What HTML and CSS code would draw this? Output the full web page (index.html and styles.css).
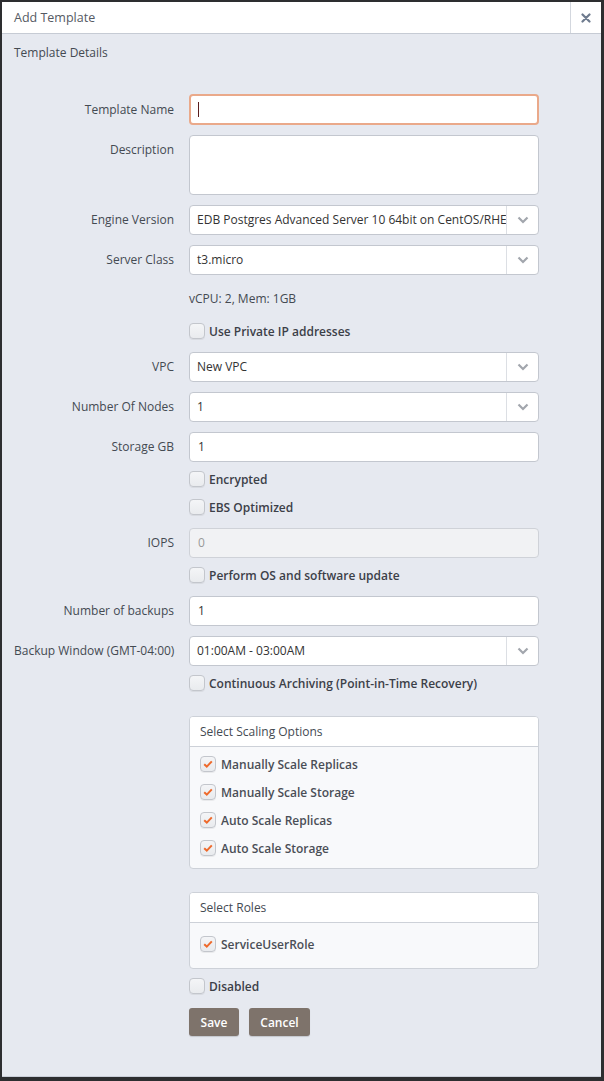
FILE: index.html
```html
<!DOCTYPE html>
<html>
<head>
<meta charset="utf-8">
<link rel="stylesheet" href="styles.css">
</head>
<body>
<div class="modal">
  <div class="modal-header">
    <div class="modal-title">Add Template</div>
    <div class="modal-close">
      <svg width="10" height="10" viewBox="0 0 10 10"><path d="M1.5 1.5 L8.5 8.5 M8.5 1.5 L1.5 8.5" stroke="#6e7b8e" stroke-width="2.2" stroke-linecap="round"/></svg>
    </div>
  </div>
  <div class="modal-body">
    <div class="section-title">Template Details</div>
    <div class="form">
      <div class="row">
        <label class="lbl lbl-focus">Template Name</label>
        <div class="input focus"><span class="caret"></span></div>
      </div>
      <div class="row">
        <label class="lbl">Description</label>
        <div class="input textarea"></div>
      </div>
      <div class="row">
        <label class="lbl">Engine Version</label>
        <div class="select"><div class="select-val">EDB Postgres Advanced Server 10 64bit on CentOS/RHEL 7</div><div class="select-btn"><svg width="12" height="8" viewBox="0 0 12 8"><path d="M1.5 1.5 L6 6 L10.5 1.5" fill="none" stroke="#a2a6ad" stroke-width="2.2"/></svg></div></div>
      </div>
      <div class="row">
        <label class="lbl">Server Class</label>
        <div class="select"><div class="select-val">t3.micro</div><div class="select-btn"><svg width="12" height="8" viewBox="0 0 12 8"><path d="M1.5 1.5 L6 6 L10.5 1.5" fill="none" stroke="#a2a6ad" stroke-width="2.2"/></svg></div></div>
      </div>
      <div class="row info-row">
        <span class="lbl"></span>
        <span class="info">vCPU: 2, Mem: 1GB</span>
      </div>
      <div class="row check-row">
        <span class="lbl"></span>
        <span class="cb"></span><span class="cb-text">Use Private IP addresses</span>
      </div>
      <div class="row">
        <label class="lbl">VPC</label>
        <div class="select"><div class="select-val">New VPC</div><div class="select-btn"><svg width="12" height="8" viewBox="0 0 12 8"><path d="M1.5 1.5 L6 6 L10.5 1.5" fill="none" stroke="#a2a6ad" stroke-width="2.2"/></svg></div></div>
      </div>
      <div class="row">
        <label class="lbl">Number Of Nodes</label>
        <div class="select"><div class="select-val">1</div><div class="select-btn"><svg width="12" height="8" viewBox="0 0 12 8"><path d="M1.5 1.5 L6 6 L10.5 1.5" fill="none" stroke="#a2a6ad" stroke-width="2.2"/></svg></div></div>
      </div>
      <div class="row">
        <label class="lbl">Storage GB</label>
        <div class="input">1</div>
      </div>
      <div class="row check-row">
        <span class="lbl"></span>
        <span class="cb"></span><span class="cb-text">Encrypted</span>
      </div>
      <div class="row check-row">
        <span class="lbl"></span>
        <span class="cb"></span><span class="cb-text">EBS Optimized</span>
      </div>
      <div class="row">
        <label class="lbl">IOPS</label>
        <div class="input disabled">0</div>
      </div>
      <div class="row check-row">
        <span class="lbl"></span>
        <span class="cb"></span><span class="cb-text">Perform OS and software update</span>
      </div>
      <div class="row">
        <label class="lbl">Number of backups</label>
        <div class="input">1</div>
      </div>
      <div class="row">
        <label class="lbl">Backup Window (GMT-04:00)</label>
        <div class="select"><div class="select-val">01:00AM - 03:00AM</div><div class="select-btn"><svg width="12" height="8" viewBox="0 0 12 8"><path d="M1.5 1.5 L6 6 L10.5 1.5" fill="none" stroke="#a2a6ad" stroke-width="2.2"/></svg></div></div>
      </div>
      <div class="row check-row">
        <span class="lbl"></span>
        <span class="cb"></span><span class="cb-text">Continuous Archiving (Point-in-Time Recovery)</span>
      </div>
      <div class="row panel-row scaling">
        <span class="lbl"></span>
        <div class="panel">
          <div class="panel-head">Select Scaling Options</div>
          <div class="panel-body">
            <div class="p-item"><span class="cb checked"><svg width="10" height="8" viewBox="0 0 10 8"><path d="M1.2 4.2 L3.8 6.6 L8.8 1.4" fill="none" stroke="#ee6a2c" stroke-width="2"/></svg></span><span class="cb-text">Manually Scale Replicas</span></div>
            <div class="p-item"><span class="cb checked"><svg width="10" height="8" viewBox="0 0 10 8"><path d="M1.2 4.2 L3.8 6.6 L8.8 1.4" fill="none" stroke="#ee6a2c" stroke-width="2"/></svg></span><span class="cb-text">Manually Scale Storage</span></div>
            <div class="p-item"><span class="cb checked"><svg width="10" height="8" viewBox="0 0 10 8"><path d="M1.2 4.2 L3.8 6.6 L8.8 1.4" fill="none" stroke="#ee6a2c" stroke-width="2"/></svg></span><span class="cb-text">Auto Scale Replicas</span></div>
            <div class="p-item"><span class="cb checked"><svg width="10" height="8" viewBox="0 0 10 8"><path d="M1.2 4.2 L3.8 6.6 L8.8 1.4" fill="none" stroke="#ee6a2c" stroke-width="2"/></svg></span><span class="cb-text">Auto Scale Storage</span></div>
          </div>
        </div>
      </div>
      <div class="row panel-row roles">
        <span class="lbl"></span>
        <div class="panel">
          <div class="panel-head">Select Roles</div>
          <div class="panel-body">
            <div class="p-item"><span class="cb checked"><svg width="10" height="8" viewBox="0 0 10 8"><path d="M1.2 4.2 L3.8 6.6 L8.8 1.4" fill="none" stroke="#ee6a2c" stroke-width="2"/></svg></span><span class="cb-text">ServiceUserRole</span></div>
          </div>
        </div>
      </div>
      <div class="row check-row disabled-row">
        <span class="lbl"></span>
        <span class="cb"></span><span class="cb-text">Disabled</span>
      </div>
      <div class="row btn-row">
        <span class="lbl"></span>
        <button class="btn btn-save">Save</button>
        <button class="btn btn-cancel">Cancel</button>
      </div>
    </div>
  </div>
</div>
</body>
</html>
```

FILE: styles.css
```css
html, body {
  margin: 0;
  padding: 0;
}
body {
  background: #2d2e30;
  font-family: "Open Sans", "Noto Sans", sans-serif;
  font-size: 12px;
  color: #444a52;
  width: 604px;
  height: 1081px;
  overflow: hidden;
}
.modal {
  margin: 2px 3px 0 2px;
  height: 1075px;
  background: #e6e9f0;
  display: flex;
  flex-direction: column;
  border-bottom: 1px solid #c9ced8;
  box-sizing: border-box;
}
.modal-header {
  height: 31px;
  background: #ffffff;
  border-bottom: 1px solid #c6cbd4;
  display: flex;
  align-items: stretch;
  flex: none;
}
.modal-title {
  flex: 1;
  display: flex;
  align-items: center;
  padding-left: 12px;
  font-size: 12.5px;
  color: #555a63;
}
.modal-close {
  width: 30px;
  border-left: 1px solid #d3d7de;
  display: flex;
  align-items: center;
  justify-content: center;
}
.modal-body {
  padding: 10px 0 0 12px;
}
.section-title {
  height: 18px;
  line-height: 18px;
  color: #444a52;
}
.form {
  padding-top: 32px;
  width: 525px;
}
.row {
  display: flex;
  align-items: flex-start;
  margin-bottom: 10px;
}
.lbl {
  width: 160px;
  flex: none;
  text-align: right;
  box-sizing: border-box;
  line-height: 30px;
  color: #444a52;
  white-space: nowrap;
  margin-right: 15px;
}
.lbl-focus {
  line-height: 31px;
}
.input {
  width: 350px;
  height: 30px;
  box-sizing: border-box;
  border: 1px solid #c3c7cf;
  border-radius: 4px;
  background: #fff;
  padding-left: 8px;
  line-height: 28px;
  color: #333;
  display: flex;
  align-items: center;
}
.input.focus {
  border: 2px solid #eaa98a;
  padding-left: 7px;
  height: 31px;
}
.caret {
  width: 1px;
  height: 15px;
  background: #5a1e1e;
}
.input.textarea {
  height: 60px;
}
.input.disabled {
  background: #f1f2f4;
  color: #999;
  border-color: #cfd2d8;
}
.select {
  width: 350px;
  height: 30px;
  box-sizing: border-box;
  border: 1px solid #c3c7cf;
  border-radius: 4px;
  background: #fff;
  display: flex;
  color: #333;
}
.select-val {
  flex: 1;
  overflow: hidden;
  white-space: nowrap;
  padding-left: 7px;
  line-height: 28px;
}
.select-btn {
  width: 31px;
  border-left: 1px solid #dcdfe4;
  display: flex;
  align-items: center;
  justify-content: center;
}
.info-row {
  height: 26px;
  margin-bottom: 13px;
  align-items: center;
}
.info-row .lbl { line-height: 26px; }
.info {
  color: #444a52;
}
.check-row {
  height: 28px;
  align-items: center;
  margin-top: -7px;
  margin-bottom: 7px;
}
.check-row .lbl { line-height: 28px; }
.cb {
  width: 14px;
  height: 14px;
  border: 1px solid #c3c6cc;
  border-radius: 4px;
  background: linear-gradient(#f4f5f7, #e9ebee);
  flex: none;
  display: flex;
  align-items: center;
  justify-content: center;
  box-shadow: 0 1px 0 rgba(0,0,0,0.06);
}
.cb-text {
  margin-left: 4px;
  font-weight: 600;
  color: #3c4048;
}
.panel-row {
  margin-top: 19px;
  margin-bottom: 23px;
}
.panel {
  width: 350px;
  box-sizing: border-box;
  border: 1px solid #cdd1d8;
  border-radius: 4px;
  background: #f8f9fb;
  overflow: hidden;
}
.panel-head {
  height: 29px;
  line-height: 29px;
  background: #fff;
  border-bottom: 1px solid #cdd1d8;
  padding-left: 10px;
  color: #444a52;
}
.scaling .panel-body {
  padding: 3px 0 6px 10px;
}
.roles .panel-body {
  padding: 7px 0 10px 10px;
}
.roles {
  margin-top: 0;
  margin-bottom: 3px;
}
.p-item {
  height: 28px;
  display: flex;
  align-items: center;
}
.p-item .cb-text {
  font-weight: 600;
  margin-left: 5px;
  color: #4a4e56;
}
.disabled-row {
  margin-top: 0;
  margin-bottom: 8px;
}
.btn-row {
  align-items: center;
}
.btn {
  height: 28px;
  border: none;
  border-radius: 3px;
  background: #7e736b;
  color: #fff;
  font-family: "Open Sans", "Noto Sans", sans-serif;
  font-size: 12px;
  font-weight: 600;
  padding: 0;
  margin-right: 10px;
  box-shadow: 0 1px 1px rgba(0,0,0,0.15);
}
.btn-save {
  width: 50px;
}
.btn-cancel {
  width: 61px;
}
```
